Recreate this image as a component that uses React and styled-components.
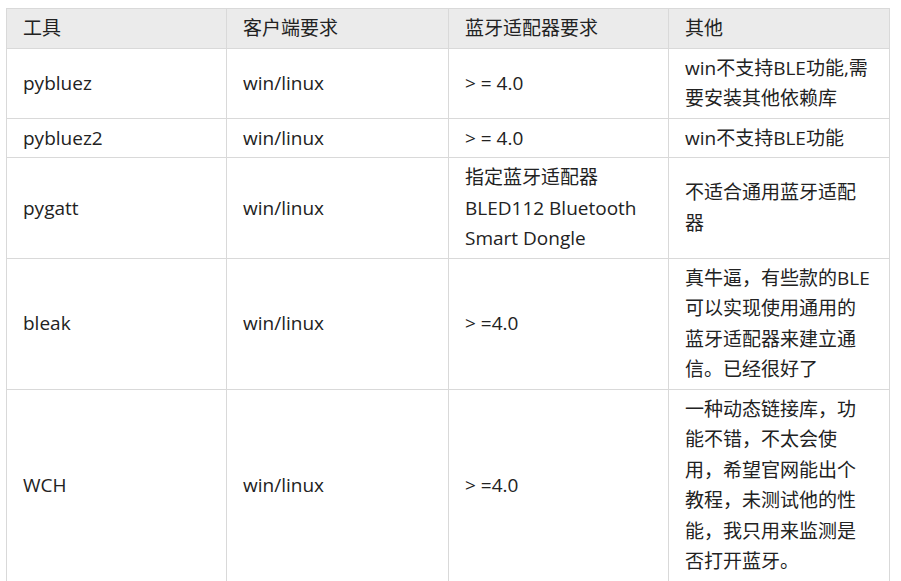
import React from "react";
import styled, { createGlobalStyle } from "styled-components";

const GlobalStyle = createGlobalStyle`
  html, body {
    margin: 0;
    padding: 0;
    background: #fff;
  }
  body {
    font-family: "Open Sans", "Noto Sans CJK SC", sans-serif;
    color: #222;
  }
`;

const Page = styled.div`
  padding: 8px 0 0 6px;
`;

const Table = styled.table`
  width: 883px;
  table-layout: fixed;
  border-collapse: collapse;
  font-size: 19px;
  line-height: 30.5px;
`;

const Col = styled.col`
  width: ${(props) => props.width}px;
`;

const HeadCell = styled.th`
  background: #ebebeb;
  border: 1px solid #d9d9d9;
  padding: 4px 16px;
  text-align: left;
  font-weight: 400;
  vertical-align: middle;
`;

const Cell = styled.td`
  border: 1px solid #d9d9d9;
  padding: 4px 16px;
  vertical-align: middle;
  word-break: break-word;
`;

const headers = ["工具", "客户端要求", "蓝牙适配器要求", "其他"];

const rows = [
  ["pybluez", "win/linux", "> = 4.0", "win不支持BLE功能,需要安装其他依赖库"],
  ["pybluez2", "win/linux", "> = 4.0", "win不支持BLE功能"],
  [
    "pygatt",
    "win/linux",
    "指定蓝牙适配器 BLED112 Bluetooth Smart Dongle",
    "不适合通用蓝牙适配器",
  ],
  [
    "bleak",
    "win/linux",
    "> =4.0",
    "真牛逼，有些款的BLE可以实现使用通用的蓝牙适配器来建立通信。已经很好了",
  ],
  [
    "WCH",
    "win/linux",
    "> =4.0",
    "一种动态链接库，功能不错，不太会使用，希望官网能出个教程，未测试他的性能，我只用来监测是否打开蓝牙。",
  ],
];

const App = () => {
  return (
    <Page>
      <GlobalStyle />
      <Table>
        <colgroup>
          <Col width={220} />
          <Col width={222} />
          <Col width={220} />
          <Col width={221} />
        </colgroup>
        <thead>
          <tr>
            {headers.map((h) => (
              <HeadCell key={h}>{h}</HeadCell>
            ))}
          </tr>
        </thead>
        <tbody>
          {rows.map((row, i) => (
            <tr key={i}>
              {row.map((c, j) => (
                <Cell key={j}>{c}</Cell>
              ))}
            </tr>
          ))}
        </tbody>
      </Table>
    </Page>
  );
};

export default App;
